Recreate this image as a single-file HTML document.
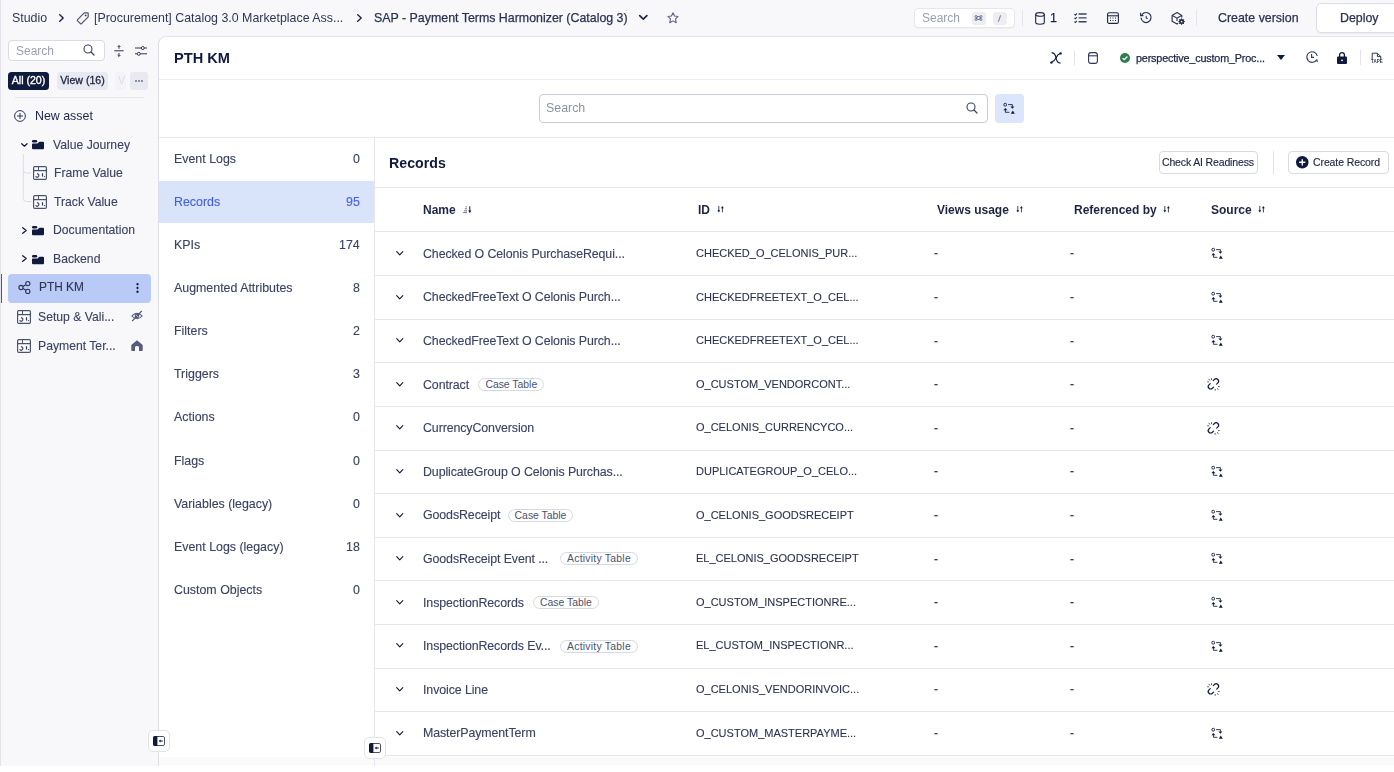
<!DOCTYPE html>
<html><head><meta charset="utf-8">
<style>
*{box-sizing:border-box;margin:0;padding:0}
html,body{width:1394px;height:772px;overflow:hidden;background:#fff}
body{font-family:"Liberation Sans",sans-serif;color:#1c2340;position:relative}
.a{position:absolute;white-space:nowrap;line-height:1;will-change:transform}
svg{position:absolute;overflow:visible}
#app{position:absolute;left:0;top:0;width:1394px;height:766px;background:#f8f8fb;overflow:hidden}
#lb{position:absolute;left:0;top:0;width:1px;height:766px;background:#e4e4ea}
#panel{position:absolute;left:158px;top:35.5px;width:1250px;height:740px;background:#fff;border-left:1px solid #dedee6;border-top:1px solid #e4e4ea;border-top-left-radius:8px}
.tb{font-size:12.4px;color:#2f3654}
.hl{position:absolute;height:1px;background:#e6e6ec}
.vl{position:absolute;width:1px;background:#e4e4ea}
.cat{font-size:12.4px;color:#3a4262;-webkit-text-stroke:0.12px currentColor}
.rt{font-size:12.4px;color:#3a4262;letter-spacing:-0.1px;-webkit-text-stroke:0.12px currentColor}
.id{font-size:11px;color:#2c3350;-webkit-text-stroke:0.1px currentColor}
.th{font-size:12px;font-weight:700;color:#1e2544}
.badge{position:absolute;height:13px;border:1px solid #d6d8e2;border-radius:7px;font-size:10.4px;color:#4a5270;line-height:11px;padding:0 6px;white-space:nowrap}
.med{-webkit-text-stroke:0.25px currentColor}
.btn{position:absolute;border:1px solid #d9dbe3;border-radius:4px;background:#fff}
</style></head><body>
<div id="app">
<div id="lb"></div>

<div class="a tb" style="left:11.5px;top:11.5px">Studio</div>
<svg style="left:58.5px;top:13.5px" width="5" height="8" viewBox="0 0 5 8"><path d="M0.7 0.7 L4.2 4.0 L0.7 7.3" fill="none" stroke="#1e2544" stroke-width="1.4" stroke-linecap="round" stroke-linejoin="round"/></svg>
<svg style="left:77px;top:11.5px" width="12" height="13" viewBox="0 0 12 13"><path d="M7.2 0.8 H10.6 Q11.2 0.8 11.2 1.4 V4.8 L4.6 11.6 Q4 12.2 3.4 11.6 L0.6 8.8 Q0 8.2 0.6 7.6Z" fill="none" stroke="#4a5270" stroke-width="1.2" stroke-linejoin="round"/><circle cx="8.6" cy="3.4" r="0.9" fill="#2f3654"/></svg>
<div class="a tb" style="left:94px;top:11.5px">[Procurement] Catalog 3.0 Marketplace Ass...</div>
<svg style="left:356.5px;top:13.5px" width="5" height="8" viewBox="0 0 5 8"><path d="M0.7 0.7 L4.2 4.0 L0.7 7.3" fill="none" stroke="#1e2544" stroke-width="1.4" stroke-linecap="round" stroke-linejoin="round"/></svg>
<div class="a tb med" style="left:374px;top:11.5px;color:#2a3252">SAP - Payment Terms Harmonizer (Catalog 3)</div>
<svg style="left:639.2px;top:15px" width="8.6" height="5" viewBox="0 0 8.6 5"><path d="M0.7 0.7 L4.3 4.2 L7.8999999999999995 0.7" fill="none" stroke="#1e2544" stroke-width="1.7" stroke-linecap="round" stroke-linejoin="round"/></svg>
<svg style="left:666.5px;top:12.3px" width="12" height="12" viewBox="0 0 13 13"><path d="M6.5 0.8 L8.2 4.4 L12 4.8 L9.2 7.5 L10 11.6 L6.5 9.6 L3 11.6 L3.8 7.5 L1 4.8 L4.8 4.4Z" fill="none" stroke="#5f6685" stroke-width="1.2" stroke-linejoin="round"/></svg>
<div class="btn" style="left:914px;top:8px;width:100.5px;height:19.5px;border-color:#e6e6ec;box-shadow:0 1px 1px rgba(0,0,0,0.03)"></div>
<div class="a" style="left:922px;top:12px;font-size:12px;color:#9a9fb0">Search</div>
<div class="a" style="left:971.5px;top:11.5px;width:14px;height:13px;background:#ededf2;border-radius:3px"></div>
<svg style="left:975px;top:15px" width="7" height="6" viewBox="0 0 7 6"><path d="M2 1.5 H5 V4.5 H2Z M2 1.5 A1 1 0 1 0 1 2.5 H2 M5 1.5 A1 1 0 1 1 6 2.5 H5 M2 4.5 A1 1 0 1 1 1 3.5 H2 M5 4.5 A1 1 0 1 0 6 3.5 H5" fill="none" stroke="#6a7090" stroke-width="0.9"/></svg>
<div class="a" style="left:992.5px;top:11.5px;width:13.5px;height:13px;background:#ededf2;border-radius:3px"></div>
<svg style="left:997px;top:14.5px" width="5" height="7" viewBox="0 0 5 7"><path d="M3.6 0.4 L1.4 6.6" stroke="#7a80a0" stroke-width="1.1"/></svg>
<div class="vl" style="left:1022px;top:10px;height:16px"></div>
<svg style="left:1035px;top:11.6px" width="10" height="13" viewBox="0 0 10 13"><ellipse cx="5" cy="2.4" rx="4.3" ry="1.8" fill="none" stroke="#1e2544" stroke-width="1.1"/><path d="M0.7 2.4 V10.6 Q0.7 12.3 5 12.3 Q9.3 12.3 9.3 10.6 V2.4" fill="none" stroke="#1e2544" stroke-width="1.1"/></svg>
<div class="a med" style="left:1050px;top:11.5px;font-size:12.4px;color:#1e2544">1</div>
<svg style="left:1074.4px;top:13.3px" width="13" height="10" viewBox="0 0 13 10"><path d="M0.4 1.2 L1.4 2.1 L2.9 0.4 M0.4 4.9 L1.4 5.8 L2.9 4.1 M0.4 8.6 L1.4 9.5 L2.9 7.8" fill="none" stroke="#2a3252" stroke-width="1.1"/><path d="M4.6 1 H12.6 M4.6 4.9 H12.6 M4.6 8.8 H12.6" stroke="#3a4262" stroke-width="1.4"/></svg>
<svg style="left:1107px;top:11.5px" width="12" height="12" viewBox="0 0 12 12"><rect x="0.6" y="0.8" width="10.8" height="10.6" rx="1.5" fill="none" stroke="#1e2544" stroke-width="1.1"/><path d="M0.6 3.8 H11.4" stroke="#1e2544" stroke-width="1.1"/><path d="M3 6 h1 M5.5 6 h1 M8 6 h1 M3 8.5 h1 M5.5 8.5 h1 M8 8.5 h1" stroke="#1e2544" stroke-width="1"/></svg>
<svg style="left:1139.5px;top:12.2px" width="12" height="11.5" viewBox="0 0 12 11.5"><path d="M2 2.6 A5 5 0 1 1 1.1 6" fill="none" stroke="#2a3252" stroke-width="1.2" stroke-linecap="round"/><path d="M0.6 0.8 V3.6 H3.4" fill="none" stroke="#2a3252" stroke-width="1.1"/><path d="M6.2 3.8 V6.4 H7.8" fill="none" stroke="#2a3252" stroke-width="1"/></svg>
<svg style="left:1171.3px;top:11.7px" width="14" height="13" viewBox="0 0 14 13"><path d="M10.8 5.6 V3.4 L6 0.6 L1.1 3.4 V9.2 L6 12 L7.2 11.3" fill="none" stroke="#2a3252" stroke-width="1.2" stroke-linejoin="round"/><path d="M1.4 3.6 L6 6.2 L10.6 3.6 M6 6.2 V9" fill="none" stroke="#2a3252" stroke-width="1.1"/><circle cx="10.6" cy="9.6" r="2.5" fill="#1e2544"/><path d="M10.6 6.4 V12.8 M7.4 9.6 H13.8 M8.3 7.3 L12.9 11.9 M12.9 7.3 L8.3 11.9" stroke="#1e2544" stroke-width="1"/><circle cx="10.6" cy="9.6" r="0.9" fill="#f8f8fb"/></svg>
<div class="vl" style="left:1196px;top:10px;height:16px"></div>
<div class="a tb med" style="left:1218px;top:11.5px;color:#2a3252">Create version</div>
<div class="btn" style="left:1316px;top:3px;width:90px;height:29.5px;border-radius:5px;border-color:#dcdde5;box-shadow:0 1px 1px rgba(0,0,0,0.04)"></div>
<div class="a tb med" style="left:1340px;top:11.5px;color:#2a3252">Deploy</div>
<div class="btn" style="left:8px;top:40px;width:97px;height:21px;border-color:#dadbe3;border-radius:4px"></div>
<div class="a" style="left:16px;top:44.5px;font-size:12px;color:#9da1b0">Search</div>
<svg style="left:83px;top:44px" width="12" height="12" viewBox="0 0 12 12"><circle cx="5" cy="5" r="4" fill="none" stroke="#3a4262" stroke-width="1.1"/><path d="M8 8 L11 11" stroke="#3a4262" stroke-width="1.2" stroke-linecap="round"/></svg>
<svg style="left:114px;top:44.5px" width="10" height="12" viewBox="0 0 10 12"><path d="M0.3 5.8 H9.7" stroke="#2f3654" stroke-width="1"/><path d="M5 0.6 V3.8 M3.6 2 L5 0.6 L6.4 2" fill="none" stroke="#2f3654" stroke-width="1"/><path d="M5 11.4 V8 M3.6 10 L5 11.4 L6.4 10" fill="none" stroke="#2f3654" stroke-width="1"/></svg>
<svg style="left:135px;top:44.5px" width="12" height="11" viewBox="0 0 12 11"><path d="M0 3 H6.2 M9.4 3 H12 M0 8.8 H2.2 M5.4 8.8 H12" stroke="#2f3654" stroke-width="1"/><circle cx="7.8" cy="3" r="1.5" fill="none" stroke="#2f3654" stroke-width="1"/><circle cx="3.8" cy="8.8" r="1.5" fill="none" stroke="#2f3654" stroke-width="1"/></svg>
<div class="a med" style="left:8px;top:71.8px;width:41px;height:18px;background:#0f1a3c;border-radius:3.5px;color:#fff;font-size:10.6px;text-align:center;line-height:17.6px;-webkit-text-stroke:0.35px #fff">All (20)</div>
<div class="a med" style="left:56.5px;top:71.8px;width:51px;height:18px;background:#e9e9f1;border-radius:3.5px;color:#1e2544;font-size:10.6px;text-align:center;line-height:17.6px;-webkit-text-stroke:0.3px #1e2544">View (16)</div>
<div class="a" style="left:115px;top:71.8px;width:11px;height:18px;background:#f4f4f8;border-radius:3px;color:#dcdde5;font-size:10.6px;padding-left:3px;line-height:17.5px;overflow:hidden">V</div>
<div class="a" style="left:130px;top:71.8px;width:17.6px;height:18px;background:#e9e9f1;border-radius:3px"></div>
<svg style="left:135.3px;top:80px" width="8" height="2" viewBox="0 0 8 2"><circle cx="1" cy="1" r="0.8" fill="#0f1a3c"/><circle cx="4" cy="1" r="0.8" fill="#0f1a3c"/><circle cx="7" cy="1" r="0.8" fill="#0f1a3c"/></svg>
<div class="hl" style="left:15px;top:97px;width:129px;background:#e6e6ec"></div>
<svg style="left:14px;top:110px" width="12" height="12" viewBox="0 0 12 12"><circle cx="6" cy="6" r="5.4" fill="none" stroke="#2f3654" stroke-width="1"/><path d="M6 3 V9 M3 6 H9" stroke="#2f3654" stroke-width="1"/></svg>
<div class="a" style="left:35px;top:110px;font-size:12.4px;color:#1e2544">New asset</div>
<svg style="left:20.8px;top:142.6px" width="6.8" height="4" viewBox="0 0 6.8 4"><path d="M0.7 0.7 L3.4 3.2 L6.1 0.7" fill="none" stroke="#0f1a3c" stroke-width="1.2" stroke-linecap="round" stroke-linejoin="round"/></svg>
<svg style="left:32px;top:140px" width="12" height="10" viewBox="0 0 12 10">
<rect x="0" y="0" width="5.2" height="2.4" rx="1.2" fill="#0f1a3c"/>
<path d="M0 4.4 Q0 3.6 0.8 3.6 H5 Q5.6 3.6 6 3.1 L6.8 2.2 Q7.2 1.7 7.8 1.7 H11 Q12 1.7 12 2.7 V8.3 Q12 9.3 11 9.3 H1 Q0 9.3 0 8.3Z" fill="#0f1a3c"/>
</svg>
<div class="a cat" style="left:53px;top:139px;font-size:12.2px">Value Journey</div>
<svg style="left:22px;top:154px" width="12" height="50" viewBox="0 0 12 50"><path d="M1.3 0 V16 Q1.3 19 4.3 19 H9.5 M1.3 16 V44.5 Q1.3 47.5 4.3 47.5 H9.5" fill="none" stroke="#dcdde5" stroke-width="1"/></svg>
<svg style="left:32.7px;top:166px" width="14" height="14" viewBox="0 0 14 14">
<rect x="0.6" y="0.6" width="12.8" height="12.8" rx="1.2" fill="#fff" stroke="#4a5270" stroke-width="1.2"/>
<path d="M0.6 4.6 H13.4" stroke="#4a5270" stroke-width="1.3"/><path d="M5.5 0.6 V4.6" stroke="#4a5270" stroke-width="1"/>
<path d="M2.6 10.2 Q3.4 11.6 4.8 11.2 Q6.3 10.4 5.8 8.8 Q5.3 7.6 3.9 7.6" fill="none" stroke="#3d4568" stroke-width="1.2"/>
<path d="M9.5 7.2 V10.6" stroke="#2a3360" stroke-width="1.2"/><circle cx="11.5" cy="10.6" r="0.7" fill="#3d4568"/>
</svg>
<div class="a cat" style="left:54px;top:167px;font-size:12.2px">Frame Value</div>
<svg style="left:32.7px;top:195px" width="14" height="14" viewBox="0 0 14 14">
<rect x="0.6" y="0.6" width="12.8" height="12.8" rx="1.2" fill="#fff" stroke="#4a5270" stroke-width="1.2"/>
<path d="M0.6 4.6 H13.4" stroke="#4a5270" stroke-width="1.3"/><path d="M5.5 0.6 V4.6" stroke="#4a5270" stroke-width="1"/>
<path d="M2.6 10.2 Q3.4 11.6 4.8 11.2 Q6.3 10.4 5.8 8.8 Q5.3 7.6 3.9 7.6" fill="none" stroke="#3d4568" stroke-width="1.2"/>
<path d="M9.5 7.2 V10.6" stroke="#2a3360" stroke-width="1.2"/><circle cx="11.5" cy="10.6" r="0.7" fill="#3d4568"/>
</svg>
<div class="a cat" style="left:54px;top:196px;font-size:12.2px">Track Value</div>
<svg style="left:21.5px;top:226.5px" width="5" height="7" viewBox="0 0 5 7"><path d="M0.7 0.7 L4.2 3.5 L0.7 6.3" fill="none" stroke="#0f1a3c" stroke-width="1.3" stroke-linecap="round" stroke-linejoin="round"/></svg>
<svg style="left:32px;top:226px" width="12" height="10" viewBox="0 0 12 10">
<rect x="0" y="0" width="5.2" height="2.4" rx="1.2" fill="#0f1a3c"/>
<path d="M0 4.4 Q0 3.6 0.8 3.6 H5 Q5.6 3.6 6 3.1 L6.8 2.2 Q7.2 1.7 7.8 1.7 H11 Q12 1.7 12 2.7 V8.3 Q12 9.3 11 9.3 H1 Q0 9.3 0 8.3Z" fill="#0f1a3c"/>
</svg>
<div class="a cat" style="left:53px;top:224px;font-size:12.2px">Documentation</div>
<svg style="left:21.5px;top:255px" width="5" height="7" viewBox="0 0 5 7"><path d="M0.7 0.7 L4.2 3.5 L0.7 6.3" fill="none" stroke="#0f1a3c" stroke-width="1.3" stroke-linecap="round" stroke-linejoin="round"/></svg>
<svg style="left:32px;top:254.8px" width="12" height="10" viewBox="0 0 12 10">
<rect x="0" y="0" width="5.2" height="2.4" rx="1.2" fill="#0f1a3c"/>
<path d="M0 4.4 Q0 3.6 0.8 3.6 H5 Q5.6 3.6 6 3.1 L6.8 2.2 Q7.2 1.7 7.8 1.7 H11 Q12 1.7 12 2.7 V8.3 Q12 9.3 11 9.3 H1 Q0 9.3 0 8.3Z" fill="#0f1a3c"/>
</svg>
<div class="a cat" style="left:53px;top:253px;font-size:12.2px">Backend</div>
<div class="a" style="left:8px;top:274px;width:143px;height:28.5px;background:#b9caf6;border-radius:4px"></div>
<div class="a" style="left:1px;top:274px;width:1.3px;height:28.5px;background:#3f4de6"></div>
<svg style="left:17.5px;top:281px" width="13" height="13" viewBox="0 0 13 13"><circle cx="3" cy="6.5" r="2.1" fill="none" stroke="#2f3654" stroke-width="1.1"/><circle cx="9.8" cy="2.6" r="2.1" fill="none" stroke="#2f3654" stroke-width="1.1"/><circle cx="9.8" cy="10.4" r="2.1" fill="none" stroke="#2f3654" stroke-width="1.1"/><path d="M4.9 5.5 L7.9 3.7 M4.9 7.5 L7.9 9.3" stroke="#2f3654" stroke-width="1.1"/></svg>
<div class="a cat" style="left:38.5px;top:282.3px;font-size:11.9px;color:#2f3654">PTH KM</div>
<svg style="left:135.6px;top:283px" width="3" height="10" viewBox="0 0 3 10"><rect x="0.4" y="0" width="2.2" height="2.4" rx="1.1" fill="#0f1a3c"/><rect x="0.4" y="3.8" width="2.2" height="2.4" rx="1.1" fill="#0f1a3c"/><rect x="0.4" y="7.6" width="2.2" height="2.4" rx="1.1" fill="#0f1a3c"/></svg>
<svg style="left:17px;top:309.5px" width="14" height="14" viewBox="0 0 14 14">
<rect x="0.6" y="0.6" width="12.8" height="12.8" rx="1.2" fill="#fff" stroke="#4a5270" stroke-width="1.2"/>
<path d="M0.6 4.6 H13.4" stroke="#4a5270" stroke-width="1.3"/><path d="M5.5 0.6 V4.6" stroke="#4a5270" stroke-width="1"/>
<path d="M2.6 10.2 Q3.4 11.6 4.8 11.2 Q6.3 10.4 5.8 8.8 Q5.3 7.6 3.9 7.6" fill="none" stroke="#3d4568" stroke-width="1.2"/>
<path d="M9.5 7.2 V10.6" stroke="#2a3360" stroke-width="1.2"/><circle cx="11.5" cy="10.6" r="0.7" fill="#3d4568"/>
</svg>
<div class="a cat" style="left:38px;top:311px;font-size:12.2px">Setup &amp; Vali...</div>
<svg style="left:131px;top:310px" width="12" height="12" viewBox="0 0 12 12"><path d="M0.8 6 Q6 0.4 11.2 6 Q6 11.6 0.8 6Z" fill="none" stroke="#4a5270" stroke-width="1.1"/><circle cx="6" cy="6" r="1.8" fill="none" stroke="#4a5270" stroke-width="1.1"/><path d="M1.2 11.2 L10.8 0.8" stroke="#4a5270" stroke-width="1.2"/></svg>
<svg style="left:17px;top:338.5px" width="14" height="14" viewBox="0 0 14 14">
<rect x="0.6" y="0.6" width="12.8" height="12.8" rx="1.2" fill="#fff" stroke="#4a5270" stroke-width="1.2"/>
<path d="M0.6 4.6 H13.4" stroke="#4a5270" stroke-width="1.3"/><path d="M5.5 0.6 V4.6" stroke="#4a5270" stroke-width="1"/>
<path d="M2.6 10.2 Q3.4 11.6 4.8 11.2 Q6.3 10.4 5.8 8.8 Q5.3 7.6 3.9 7.6" fill="none" stroke="#3d4568" stroke-width="1.2"/>
<path d="M9.5 7.2 V10.6" stroke="#2a3360" stroke-width="1.2"/><circle cx="11.5" cy="10.6" r="0.7" fill="#3d4568"/>
</svg>
<div class="a cat" style="left:38px;top:340px;font-size:12.2px">Payment Ter...</div>
<svg style="left:131px;top:339.5px" width="12" height="11" viewBox="0 0 12 11"><path d="M6 0.3 L11.7 5 V10.3 Q11.7 11 11 11 H8 V7.2 Q8 6 6 6 Q4 6 4 7.2 V11 H1 Q0.3 11 0.3 10.3 V5Z" fill="#555c7d"/></svg>
</div>
<div id="panel"></div>
<div class="a" style="left:159px;top:757px;width:1235px;height:8px;background:#fafafb"></div>
<div class="a" style="left:174px;top:50.5px;font-size:14.6px;font-weight:700;color:#0f1a3c">PTH KM</div>
<div class="hl" style="left:159px;top:79px;width:1235px;background:#ebebf0"></div>
<svg style="left:1050px;top:51.5px" width="12" height="12" viewBox="0 0 12 12"><path d="M1.2 10.6 C4 9.5 5.5 7 6 6 C6.8 4 8 2 10.8 1.2" fill="none" stroke="#0f1a3c" stroke-width="1.1"/><path d="M1.6 0.6 C4.4 0.8 5.6 3.4 6 5.8 C6.4 8.4 8 11 10.6 11.2" fill="none" stroke="#0f1a3c" stroke-width="1.1"/><circle cx="1.4" cy="10.6" r="1.2" fill="#0f1a3c"/><circle cx="10.6" cy="1.4" r="1.2" fill="#0f1a3c"/></svg>
<div class="vl" style="left:1074px;top:50.5px;height:14px"></div>
<svg style="left:1088px;top:51.5px" width="10" height="12" viewBox="0 0 10 12"><rect x="0.6" y="0.6" width="8.8" height="10.8" rx="2.4" fill="none" stroke="#2f3654" stroke-width="1.1"/><path d="M0.6 3.8 H9.4" stroke="#2f3654" stroke-width="1.1"/></svg>
<svg style="left:1119.5px;top:52.5px" width="10" height="10" viewBox="0 0 10 10"><circle cx="5" cy="5" r="5" fill="#2e7d4f"/><path d="M2.6 5.1 L4.3 6.7 L7.4 3.5" fill="none" stroke="#fff" stroke-width="1.3"/></svg>
<div class="a med" style="left:1135.5px;top:52.6px;font-size:10.8px;color:#1e2544;letter-spacing:-0.17px">perspective_custom_Proc...</div>
<svg style="left:1276.5px;top:55px" width="8" height="5" viewBox="0 0 8 5"><path d="M0 0 H8 L4 5Z" fill="#0f1a3c"/></svg>
<svg style="left:1306px;top:51px" width="13" height="12" viewBox="0 0 13 12"><path d="M10.8 8.5 A5.3 5.3 0 1 1 11.3 5" fill="none" stroke="#2f3654" stroke-width="1.1"/><path d="M5.6 3 V6.4 H8" fill="none" stroke="#2f3654" stroke-width="1.1"/><path d="M9.5 10 L12 11 L11.4 8.6Z" fill="#2f3654"/></svg>
<svg style="left:1336.5px;top:51.5px" width="10" height="12" viewBox="0 0 10 12"><path d="M2.6 5 V3 A2.4 2.4 0 0 1 7.4 3 V5" fill="none" stroke="#0f1a3c" stroke-width="1.3"/><rect x="0" y="4.6" width="10" height="7.4" rx="1" fill="#0f1a3c"/><circle cx="5" cy="8.3" r="0.9" fill="#fff"/></svg>
<div class="vl" style="left:1359.5px;top:50px;height:14.5px"></div>
<svg style="left:1371px;top:51.5px" width="11" height="13" viewBox="0 0 11 13"><path d="M1.2 8 V1.2 H6.4 L9.8 4.6 V8" fill="none" stroke="#2f3654" stroke-width="1"/><path d="M6.4 1.2 V4.6 H9.8" fill="none" stroke="#2f3654" stroke-width="1"/></svg>
<div class="a" style="left:1371px;top:59.5px;font-size:4.5px;font-weight:700;color:#2f3654">TAPE</div>
<div class="btn" style="left:539px;top:94px;width:449px;height:28.5px;border-color:#c9ccd8;border-radius:4px"></div>
<div class="a" style="left:546px;top:102px;font-size:12.4px;color:#8d92a5">Search</div>
<svg style="left:966px;top:102px" width="12" height="12" viewBox="0 0 12 12"><circle cx="5" cy="5" r="4" fill="none" stroke="#3a4262" stroke-width="1.1"/><path d="M8 8 L11 11" stroke="#3a4262" stroke-width="1.2" stroke-linecap="round"/></svg>
<div class="a" style="left:995px;top:94px;width:28.5px;height:28.5px;background:#dbe5fb;border-radius:4px"></div>
<svg style="left:1003px;top:103px" width="12" height="11" viewBox="0 0 12 11">
<rect x="0.9" y="0.3" width="2.6" height="2.8" rx="1.1" fill="none" stroke="#0f1a3c" stroke-width="0.9"/>
<path d="M5.1 1.6 H9.4 V3.6" fill="none" stroke="#0f1a3c" stroke-width="1" opacity="0.85"/>
<path d="M7.4 3.5 H11.4 L9.4 5.7Z" fill="#0f1a3c"/>
<path d="M2.4 6.6 V9.3 H6.4" fill="none" stroke="#0f1a3c" stroke-width="1" opacity="0.85"/>
<path d="M0.4 7.2 L2.4 4.9 L4.4 7.2Z" fill="#0f1a3c"/>
<path d="M7.8 10.7 L9.8 7.6 L11.8 10.7Z" fill="#0f1a3c"/>
</svg>
<div class="hl" style="left:159px;top:137px;width:1235px;background:#e6e6ec"></div>
<div class="vl" style="left:374px;top:137px;height:629px;background:#e6e6ec"></div>
<div class="a cat" style="left:174px;top:152.7px;color:#3a4262">Event Logs</div>
<div class="a cat" style="right:1034px;top:152.7px;color:#3a4262">0</div>
<div class="a" style="left:159px;top:181px;width:215px;height:42px;background:#d9e4fb"></div>
<div class="a cat" style="left:174px;top:195.8px;color:#4361e0">Records</div>
<div class="a cat" style="right:1034px;top:195.8px;color:#4361e0">95</div>
<div class="a cat" style="left:174px;top:238.9px;color:#3a4262">KPIs</div>
<div class="a cat" style="right:1034px;top:238.9px;color:#3a4262">174</div>
<div class="a cat" style="left:174px;top:282.1px;color:#3a4262">Augmented Attributes</div>
<div class="a cat" style="right:1034px;top:282.1px;color:#3a4262">8</div>
<div class="a cat" style="left:174px;top:325.2px;color:#3a4262">Filters</div>
<div class="a cat" style="right:1034px;top:325.2px;color:#3a4262">2</div>
<div class="a cat" style="left:174px;top:368.3px;color:#3a4262">Triggers</div>
<div class="a cat" style="right:1034px;top:368.3px;color:#3a4262">3</div>
<div class="a cat" style="left:174px;top:411.4px;color:#3a4262">Actions</div>
<div class="a cat" style="right:1034px;top:411.4px;color:#3a4262">0</div>
<div class="a cat" style="left:174px;top:454.5px;color:#3a4262">Flags</div>
<div class="a cat" style="right:1034px;top:454.5px;color:#3a4262">0</div>
<div class="a cat" style="left:174px;top:497.7px;color:#3a4262">Variables (legacy)</div>
<div class="a cat" style="right:1034px;top:497.7px;color:#3a4262">0</div>
<div class="a cat" style="left:174px;top:540.8px;color:#3a4262">Event Logs (legacy)</div>
<div class="a cat" style="right:1034px;top:540.8px;color:#3a4262">18</div>
<div class="a cat" style="left:174px;top:583.9px;color:#3a4262">Custom Objects</div>
<div class="a cat" style="right:1034px;top:583.9px;color:#3a4262">0</div>
<div class="a" style="left:389px;top:155.5px;font-size:14.2px;font-weight:700;color:#0f1a3c">Records</div>
<div class="btn" style="left:1158.5px;top:151px;width:99.5px;height:23px;border-radius:4px"></div>
<div class="a" style="-webkit-text-stroke:0.15px #1e2544;left:1162px;top:157px;font-size:10.5px;color:#1e2544;letter-spacing:-0.15px">Check AI Readiness</div>
<div class="vl" style="left:1272.5px;top:151px;height:23px"></div>
<div class="btn" style="left:1287.5px;top:151px;width:101.5px;height:23px;border-radius:4px"></div>
<svg style="left:1296px;top:156px" width="12.5" height="12.5" viewBox="0 0 12 12"><circle cx="6" cy="6" r="6" fill="#0f1a3c"/><path d="M6 3 V9 M3 6 H9" stroke="#fff" stroke-width="1.3"/></svg>
<div class="a" style="-webkit-text-stroke:0.15px #1e2544;left:1313px;top:157px;font-size:10.5px;color:#1e2544;letter-spacing:-0.1px">Create Record</div>
<div class="hl" style="left:375px;top:187px;width:1019px;background:#e6e6ec"></div>
<div class="a th" style="left:423px;top:204px">Name</div>
<svg style="left:463px;top:206px" width="9" height="7" viewBox="0 0 9 7">
<path d="M2.6 0.8 H4 M1.8 2.8 H4 M1 4.8 H4 M0.2 6.6 H4" stroke="#0f1a3c" stroke-width="0.8" opacity="0.75"/>
<path d="M6.8 0.3 V6" stroke="#0f1a3c" stroke-width="1"/><path d="M5.2 4.6 L6.8 6.9 L8.4 4.6Z" fill="#0f1a3c"/>
</svg>
<div class="a th" style="left:697.5px;top:204px">ID</div>
<svg style="left:716.5px;top:206.3px" width="7" height="7" viewBox="0 0 7 7">
<path d="M1.8 0 V5" stroke="#0f1a3c" stroke-width="1" opacity="0.8"/><path d="M0.4 4.2 L1.8 6.4 L3.2 4.2Z" fill="#0f1a3c"/>
<path d="M5.4 6.4 V1.6" stroke="#0f1a3c" stroke-width="1" opacity="0.8"/><path d="M4 2.2 L5.4 0 L6.8 2.2Z" fill="#0f1a3c"/>
</svg>
<div class="a th" style="left:937px;top:204px">Views usage</div>
<svg style="left:1016.3px;top:206.3px" width="7" height="7" viewBox="0 0 7 7">
<path d="M1.8 0 V5" stroke="#0f1a3c" stroke-width="1" opacity="0.8"/><path d="M0.4 4.2 L1.8 6.4 L3.2 4.2Z" fill="#0f1a3c"/>
<path d="M5.4 6.4 V1.6" stroke="#0f1a3c" stroke-width="1" opacity="0.8"/><path d="M4 2.2 L5.4 0 L6.8 2.2Z" fill="#0f1a3c"/>
</svg>
<div class="a th" style="left:1074px;top:204px">Referenced by</div>
<svg style="left:1163.2px;top:206.3px" width="7" height="7" viewBox="0 0 7 7">
<path d="M1.8 0 V5" stroke="#0f1a3c" stroke-width="1" opacity="0.8"/><path d="M0.4 4.2 L1.8 6.4 L3.2 4.2Z" fill="#0f1a3c"/>
<path d="M5.4 6.4 V1.6" stroke="#0f1a3c" stroke-width="1" opacity="0.8"/><path d="M4 2.2 L5.4 0 L6.8 2.2Z" fill="#0f1a3c"/>
</svg>
<div class="a th" style="left:1211px;top:204px">Source</div>
<svg style="left:1258.2px;top:206.3px" width="7" height="7" viewBox="0 0 7 7">
<path d="M1.8 0 V5" stroke="#0f1a3c" stroke-width="1" opacity="0.8"/><path d="M0.4 4.2 L1.8 6.4 L3.2 4.2Z" fill="#0f1a3c"/>
<path d="M5.4 6.4 V1.6" stroke="#0f1a3c" stroke-width="1" opacity="0.8"/><path d="M4 2.2 L5.4 0 L6.8 2.2Z" fill="#0f1a3c"/>
</svg>
<div class="hl" style="left:375px;top:231px;width:1019px;background:#e6e6ec"></div>
<svg style="left:396px;top:251.0px" width="7.5" height="4.6" viewBox="0 0 7.5 4.6"><path d="M0.7 0.7 L3.75 3.8 L6.8 0.7" fill="none" stroke="#0f1a3c" stroke-width="1.15" stroke-linecap="round" stroke-linejoin="round"/></svg>
<div class="a rt" style="left:423px;top:247.8px">Checked O Celonis PurchaseRequi...</div>
<div class="a id" style="left:695.5px;top:247.9px">CHECKED_O_CELONIS_PUR...</div>
<div class="a" style="left:933.6px;top:247.4px;font-size:12px;color:#2f3654;-webkit-text-stroke:0.2px #2f3654">-</div>
<div class="a" style="left:1070.2px;top:247.4px;font-size:12px;color:#2f3654;-webkit-text-stroke:0.2px #2f3654">-</div>
<svg style="left:1211px;top:248.1px" width="12" height="11" viewBox="0 0 12 11">
<rect x="0.9" y="0.3" width="2.6" height="2.8" rx="1.1" fill="none" stroke="#0f1a3c" stroke-width="0.9"/>
<path d="M5.1 1.6 H9.4 V3.6" fill="none" stroke="#0f1a3c" stroke-width="1" opacity="0.85"/>
<path d="M7.4 3.5 H11.4 L9.4 5.7Z" fill="#0f1a3c"/>
<path d="M2.4 6.6 V9.3 H6.4" fill="none" stroke="#0f1a3c" stroke-width="1" opacity="0.85"/>
<path d="M0.4 7.2 L2.4 4.9 L4.4 7.2Z" fill="#0f1a3c"/>
<path d="M7.8 10.7 L9.8 7.6 L11.8 10.7Z" fill="#0f1a3c"/>
</svg>
<div class="hl" style="left:375px;top:275.2px;width:1019px;background:#e6e6ec"></div>
<svg style="left:396px;top:294.6px" width="7.5" height="4.6" viewBox="0 0 7.5 4.6"><path d="M0.7 0.7 L3.75 3.8 L6.8 0.7" fill="none" stroke="#0f1a3c" stroke-width="1.15" stroke-linecap="round" stroke-linejoin="round"/></svg>
<div class="a rt" style="left:423px;top:291.4px">CheckedFreeText O Celonis Purch...</div>
<div class="a id" style="left:695.5px;top:291.5px">CHECKEDFREETEXT_O_CEL...</div>
<div class="a" style="left:933.6px;top:291.0px;font-size:12px;color:#2f3654;-webkit-text-stroke:0.2px #2f3654">-</div>
<div class="a" style="left:1070.2px;top:291.0px;font-size:12px;color:#2f3654;-webkit-text-stroke:0.2px #2f3654">-</div>
<svg style="left:1211px;top:291.7px" width="12" height="11" viewBox="0 0 12 11">
<rect x="0.9" y="0.3" width="2.6" height="2.8" rx="1.1" fill="none" stroke="#0f1a3c" stroke-width="0.9"/>
<path d="M5.1 1.6 H9.4 V3.6" fill="none" stroke="#0f1a3c" stroke-width="1" opacity="0.85"/>
<path d="M7.4 3.5 H11.4 L9.4 5.7Z" fill="#0f1a3c"/>
<path d="M2.4 6.6 V9.3 H6.4" fill="none" stroke="#0f1a3c" stroke-width="1" opacity="0.85"/>
<path d="M0.4 7.2 L2.4 4.9 L4.4 7.2Z" fill="#0f1a3c"/>
<path d="M7.8 10.7 L9.8 7.6 L11.8 10.7Z" fill="#0f1a3c"/>
</svg>
<div class="hl" style="left:375px;top:318.8px;width:1019px;background:#e6e6ec"></div>
<svg style="left:396px;top:338.20000000000005px" width="7.5" height="4.6" viewBox="0 0 7.5 4.6"><path d="M0.7 0.7 L3.75 3.8 L6.8 0.7" fill="none" stroke="#0f1a3c" stroke-width="1.15" stroke-linecap="round" stroke-linejoin="round"/></svg>
<div class="a rt" style="left:423px;top:335.0px">CheckedFreeText O Celonis Purch...</div>
<div class="a id" style="left:695.5px;top:335.1px">CHECKEDFREETEXT_O_CEL...</div>
<div class="a" style="left:933.6px;top:334.6px;font-size:12px;color:#2f3654;-webkit-text-stroke:0.2px #2f3654">-</div>
<div class="a" style="left:1070.2px;top:334.6px;font-size:12px;color:#2f3654;-webkit-text-stroke:0.2px #2f3654">-</div>
<svg style="left:1211px;top:335.3px" width="12" height="11" viewBox="0 0 12 11">
<rect x="0.9" y="0.3" width="2.6" height="2.8" rx="1.1" fill="none" stroke="#0f1a3c" stroke-width="0.9"/>
<path d="M5.1 1.6 H9.4 V3.6" fill="none" stroke="#0f1a3c" stroke-width="1" opacity="0.85"/>
<path d="M7.4 3.5 H11.4 L9.4 5.7Z" fill="#0f1a3c"/>
<path d="M2.4 6.6 V9.3 H6.4" fill="none" stroke="#0f1a3c" stroke-width="1" opacity="0.85"/>
<path d="M0.4 7.2 L2.4 4.9 L4.4 7.2Z" fill="#0f1a3c"/>
<path d="M7.8 10.7 L9.8 7.6 L11.8 10.7Z" fill="#0f1a3c"/>
</svg>
<div class="hl" style="left:375px;top:362.4px;width:1019px;background:#e6e6ec"></div>
<svg style="left:396px;top:381.8px" width="7.5" height="4.6" viewBox="0 0 7.5 4.6"><path d="M0.7 0.7 L3.75 3.8 L6.8 0.7" fill="none" stroke="#0f1a3c" stroke-width="1.15" stroke-linecap="round" stroke-linejoin="round"/></svg>
<div class="a rt" style="left:423px;top:378.6px">Contract</div>
<div class="badge" style="left:478.4px;top:377.9px;letter-spacing:0">Case Table</div>
<div class="a id" style="left:695.5px;top:378.7px">O_CUSTOM_VENDORCONT...</div>
<div class="a" style="left:933.6px;top:378.2px;font-size:12px;color:#2f3654;-webkit-text-stroke:0.2px #2f3654">-</div>
<div class="a" style="left:1070.2px;top:378.2px;font-size:12px;color:#2f3654;-webkit-text-stroke:0.2px #2f3654">-</div>
<svg style="left:1206.7px;top:377.9px" width="13" height="13" viewBox="0 0 13 13">
<path d="M6.2 2.6 L7.4 1.5 A2.4 2.4 0 0 1 10.9 4.9 L9.7 6.1" fill="none" stroke="#0f1a3c" stroke-width="1.2" stroke-linecap="round"/>
<path d="M3.2 5.6 L2.0 6.8 A2.4 2.4 0 0 0 5.4 10.3 L6.6 9.1" fill="none" stroke="#0f1a3c" stroke-width="1.2" stroke-linecap="round"/>
<path d="M2.0 1.2 L2.6 2.2 M4.5 0.6 L4.5 1.6 M0.6 3.8 L1.6 3.8 M11.3 8.6 L12.3 8.6 M10.5 10.6 L11.1 11.5 M8.2 11.3 L8.2 12.3" stroke="#0f1a3c" stroke-width="0.9" stroke-linecap="round" opacity="0.8"/>
</svg>
<div class="hl" style="left:375px;top:406.0px;width:1019px;background:#e6e6ec"></div>
<svg style="left:396px;top:425.40000000000003px" width="7.5" height="4.6" viewBox="0 0 7.5 4.6"><path d="M0.7 0.7 L3.75 3.8 L6.8 0.7" fill="none" stroke="#0f1a3c" stroke-width="1.15" stroke-linecap="round" stroke-linejoin="round"/></svg>
<div class="a rt" style="left:423px;top:422.2px">CurrencyConversion</div>
<div class="a id" style="left:695.5px;top:422.3px">O_CELONIS_CURRENCYCO...</div>
<div class="a" style="left:933.6px;top:421.8px;font-size:12px;color:#2f3654;-webkit-text-stroke:0.2px #2f3654">-</div>
<div class="a" style="left:1070.2px;top:421.8px;font-size:12px;color:#2f3654;-webkit-text-stroke:0.2px #2f3654">-</div>
<svg style="left:1206.7px;top:421.5px" width="13" height="13" viewBox="0 0 13 13">
<path d="M6.2 2.6 L7.4 1.5 A2.4 2.4 0 0 1 10.9 4.9 L9.7 6.1" fill="none" stroke="#0f1a3c" stroke-width="1.2" stroke-linecap="round"/>
<path d="M3.2 5.6 L2.0 6.8 A2.4 2.4 0 0 0 5.4 10.3 L6.6 9.1" fill="none" stroke="#0f1a3c" stroke-width="1.2" stroke-linecap="round"/>
<path d="M2.0 1.2 L2.6 2.2 M4.5 0.6 L4.5 1.6 M0.6 3.8 L1.6 3.8 M11.3 8.6 L12.3 8.6 M10.5 10.6 L11.1 11.5 M8.2 11.3 L8.2 12.3" stroke="#0f1a3c" stroke-width="0.9" stroke-linecap="round" opacity="0.8"/>
</svg>
<div class="hl" style="left:375px;top:449.6px;width:1019px;background:#e6e6ec"></div>
<svg style="left:396px;top:469.00000000000006px" width="7.5" height="4.6" viewBox="0 0 7.5 4.6"><path d="M0.7 0.7 L3.75 3.8 L6.8 0.7" fill="none" stroke="#0f1a3c" stroke-width="1.15" stroke-linecap="round" stroke-linejoin="round"/></svg>
<div class="a rt" style="left:423px;top:465.8px">DuplicateGroup O Celonis Purchas...</div>
<div class="a id" style="left:695.5px;top:465.9px">DUPLICATEGROUP_O_CELO...</div>
<div class="a" style="left:933.6px;top:465.4px;font-size:12px;color:#2f3654;-webkit-text-stroke:0.2px #2f3654">-</div>
<div class="a" style="left:1070.2px;top:465.4px;font-size:12px;color:#2f3654;-webkit-text-stroke:0.2px #2f3654">-</div>
<svg style="left:1211px;top:466.1px" width="12" height="11" viewBox="0 0 12 11">
<rect x="0.9" y="0.3" width="2.6" height="2.8" rx="1.1" fill="none" stroke="#0f1a3c" stroke-width="0.9"/>
<path d="M5.1 1.6 H9.4 V3.6" fill="none" stroke="#0f1a3c" stroke-width="1" opacity="0.85"/>
<path d="M7.4 3.5 H11.4 L9.4 5.7Z" fill="#0f1a3c"/>
<path d="M2.4 6.6 V9.3 H6.4" fill="none" stroke="#0f1a3c" stroke-width="1" opacity="0.85"/>
<path d="M0.4 7.2 L2.4 4.9 L4.4 7.2Z" fill="#0f1a3c"/>
<path d="M7.8 10.7 L9.8 7.6 L11.8 10.7Z" fill="#0f1a3c"/>
</svg>
<div class="hl" style="left:375px;top:493.2px;width:1019px;background:#e6e6ec"></div>
<svg style="left:396px;top:512.6px" width="7.5" height="4.6" viewBox="0 0 7.5 4.6"><path d="M0.7 0.7 L3.75 3.8 L6.8 0.7" fill="none" stroke="#0f1a3c" stroke-width="1.15" stroke-linecap="round" stroke-linejoin="round"/></svg>
<div class="a rt" style="left:423px;top:509.4px">GoodsReceipt</div>
<div class="badge" style="left:507.6px;top:508.7px;letter-spacing:0">Case Table</div>
<div class="a id" style="left:695.5px;top:509.5px">O_CELONIS_GOODSRECEIPT</div>
<div class="a" style="left:933.6px;top:509.0px;font-size:12px;color:#2f3654;-webkit-text-stroke:0.2px #2f3654">-</div>
<div class="a" style="left:1070.2px;top:509.0px;font-size:12px;color:#2f3654;-webkit-text-stroke:0.2px #2f3654">-</div>
<svg style="left:1211px;top:509.7px" width="12" height="11" viewBox="0 0 12 11">
<rect x="0.9" y="0.3" width="2.6" height="2.8" rx="1.1" fill="none" stroke="#0f1a3c" stroke-width="0.9"/>
<path d="M5.1 1.6 H9.4 V3.6" fill="none" stroke="#0f1a3c" stroke-width="1" opacity="0.85"/>
<path d="M7.4 3.5 H11.4 L9.4 5.7Z" fill="#0f1a3c"/>
<path d="M2.4 6.6 V9.3 H6.4" fill="none" stroke="#0f1a3c" stroke-width="1" opacity="0.85"/>
<path d="M0.4 7.2 L2.4 4.9 L4.4 7.2Z" fill="#0f1a3c"/>
<path d="M7.8 10.7 L9.8 7.6 L11.8 10.7Z" fill="#0f1a3c"/>
</svg>
<div class="hl" style="left:375px;top:536.8px;width:1019px;background:#e6e6ec"></div>
<svg style="left:396px;top:556.1999999999999px" width="7.5" height="4.6" viewBox="0 0 7.5 4.6"><path d="M0.7 0.7 L3.75 3.8 L6.8 0.7" fill="none" stroke="#0f1a3c" stroke-width="1.15" stroke-linecap="round" stroke-linejoin="round"/></svg>
<div class="a rt" style="left:423px;top:553.0px">GoodsReceipt Event ...</div>
<div class="badge" style="left:560px;top:552.3px;letter-spacing:0.25px">Activity Table</div>
<div class="a id" style="left:695.5px;top:553.1px">EL_CELONIS_GOODSRECEIPT</div>
<div class="a" style="left:933.6px;top:552.6px;font-size:12px;color:#2f3654;-webkit-text-stroke:0.2px #2f3654">-</div>
<div class="a" style="left:1070.2px;top:552.6px;font-size:12px;color:#2f3654;-webkit-text-stroke:0.2px #2f3654">-</div>
<svg style="left:1211px;top:553.3px" width="12" height="11" viewBox="0 0 12 11">
<rect x="0.9" y="0.3" width="2.6" height="2.8" rx="1.1" fill="none" stroke="#0f1a3c" stroke-width="0.9"/>
<path d="M5.1 1.6 H9.4 V3.6" fill="none" stroke="#0f1a3c" stroke-width="1" opacity="0.85"/>
<path d="M7.4 3.5 H11.4 L9.4 5.7Z" fill="#0f1a3c"/>
<path d="M2.4 6.6 V9.3 H6.4" fill="none" stroke="#0f1a3c" stroke-width="1" opacity="0.85"/>
<path d="M0.4 7.2 L2.4 4.9 L4.4 7.2Z" fill="#0f1a3c"/>
<path d="M7.8 10.7 L9.8 7.6 L11.8 10.7Z" fill="#0f1a3c"/>
</svg>
<div class="hl" style="left:375px;top:580.4px;width:1019px;background:#e6e6ec"></div>
<svg style="left:396px;top:599.8px" width="7.5" height="4.6" viewBox="0 0 7.5 4.6"><path d="M0.7 0.7 L3.75 3.8 L6.8 0.7" fill="none" stroke="#0f1a3c" stroke-width="1.15" stroke-linecap="round" stroke-linejoin="round"/></svg>
<div class="a rt" style="left:423px;top:596.6px">InspectionRecords</div>
<div class="badge" style="left:533px;top:595.9px;letter-spacing:0">Case Table</div>
<div class="a id" style="left:695.5px;top:596.7px">O_CUSTOM_INSPECTIONRE...</div>
<div class="a" style="left:933.6px;top:596.2px;font-size:12px;color:#2f3654;-webkit-text-stroke:0.2px #2f3654">-</div>
<div class="a" style="left:1070.2px;top:596.2px;font-size:12px;color:#2f3654;-webkit-text-stroke:0.2px #2f3654">-</div>
<svg style="left:1211px;top:596.9px" width="12" height="11" viewBox="0 0 12 11">
<rect x="0.9" y="0.3" width="2.6" height="2.8" rx="1.1" fill="none" stroke="#0f1a3c" stroke-width="0.9"/>
<path d="M5.1 1.6 H9.4 V3.6" fill="none" stroke="#0f1a3c" stroke-width="1" opacity="0.85"/>
<path d="M7.4 3.5 H11.4 L9.4 5.7Z" fill="#0f1a3c"/>
<path d="M2.4 6.6 V9.3 H6.4" fill="none" stroke="#0f1a3c" stroke-width="1" opacity="0.85"/>
<path d="M0.4 7.2 L2.4 4.9 L4.4 7.2Z" fill="#0f1a3c"/>
<path d="M7.8 10.7 L9.8 7.6 L11.8 10.7Z" fill="#0f1a3c"/>
</svg>
<div class="hl" style="left:375px;top:624.0px;width:1019px;background:#e6e6ec"></div>
<svg style="left:396px;top:643.4px" width="7.5" height="4.6" viewBox="0 0 7.5 4.6"><path d="M0.7 0.7 L3.75 3.8 L6.8 0.7" fill="none" stroke="#0f1a3c" stroke-width="1.15" stroke-linecap="round" stroke-linejoin="round"/></svg>
<div class="a rt" style="left:423px;top:640.2px">InspectionRecords Ev...</div>
<div class="badge" style="left:560px;top:639.5px;letter-spacing:0.25px">Activity Table</div>
<div class="a id" style="left:695.5px;top:640.3px">EL_CUSTOM_INSPECTIONR...</div>
<div class="a" style="left:933.6px;top:639.8px;font-size:12px;color:#2f3654;-webkit-text-stroke:0.2px #2f3654">-</div>
<div class="a" style="left:1070.2px;top:639.8px;font-size:12px;color:#2f3654;-webkit-text-stroke:0.2px #2f3654">-</div>
<svg style="left:1211px;top:640.5px" width="12" height="11" viewBox="0 0 12 11">
<rect x="0.9" y="0.3" width="2.6" height="2.8" rx="1.1" fill="none" stroke="#0f1a3c" stroke-width="0.9"/>
<path d="M5.1 1.6 H9.4 V3.6" fill="none" stroke="#0f1a3c" stroke-width="1" opacity="0.85"/>
<path d="M7.4 3.5 H11.4 L9.4 5.7Z" fill="#0f1a3c"/>
<path d="M2.4 6.6 V9.3 H6.4" fill="none" stroke="#0f1a3c" stroke-width="1" opacity="0.85"/>
<path d="M0.4 7.2 L2.4 4.9 L4.4 7.2Z" fill="#0f1a3c"/>
<path d="M7.8 10.7 L9.8 7.6 L11.8 10.7Z" fill="#0f1a3c"/>
</svg>
<div class="hl" style="left:375px;top:667.6px;width:1019px;background:#e6e6ec"></div>
<svg style="left:396px;top:687.0px" width="7.5" height="4.6" viewBox="0 0 7.5 4.6"><path d="M0.7 0.7 L3.75 3.8 L6.8 0.7" fill="none" stroke="#0f1a3c" stroke-width="1.15" stroke-linecap="round" stroke-linejoin="round"/></svg>
<div class="a rt" style="left:423px;top:683.8px">Invoice Line</div>
<div class="a id" style="left:695.5px;top:683.9px">O_CELONIS_VENDORINVOIC...</div>
<div class="a" style="left:933.6px;top:683.4px;font-size:12px;color:#2f3654;-webkit-text-stroke:0.2px #2f3654">-</div>
<div class="a" style="left:1070.2px;top:683.4px;font-size:12px;color:#2f3654;-webkit-text-stroke:0.2px #2f3654">-</div>
<svg style="left:1206.7px;top:683.1px" width="13" height="13" viewBox="0 0 13 13">
<path d="M6.2 2.6 L7.4 1.5 A2.4 2.4 0 0 1 10.9 4.9 L9.7 6.1" fill="none" stroke="#0f1a3c" stroke-width="1.2" stroke-linecap="round"/>
<path d="M3.2 5.6 L2.0 6.8 A2.4 2.4 0 0 0 5.4 10.3 L6.6 9.1" fill="none" stroke="#0f1a3c" stroke-width="1.2" stroke-linecap="round"/>
<path d="M2.0 1.2 L2.6 2.2 M4.5 0.6 L4.5 1.6 M0.6 3.8 L1.6 3.8 M11.3 8.6 L12.3 8.6 M10.5 10.6 L11.1 11.5 M8.2 11.3 L8.2 12.3" stroke="#0f1a3c" stroke-width="0.9" stroke-linecap="round" opacity="0.8"/>
</svg>
<div class="hl" style="left:375px;top:711.2px;width:1019px;background:#e6e6ec"></div>
<svg style="left:396px;top:730.6px" width="7.5" height="4.6" viewBox="0 0 7.5 4.6"><path d="M0.7 0.7 L3.75 3.8 L6.8 0.7" fill="none" stroke="#0f1a3c" stroke-width="1.15" stroke-linecap="round" stroke-linejoin="round"/></svg>
<div class="a rt" style="left:423px;top:727.4px">MasterPaymentTerm</div>
<div class="a id" style="left:695.5px;top:727.5px">O_CUSTOM_MASTERPAYME...</div>
<div class="a" style="left:933.6px;top:727.0px;font-size:12px;color:#2f3654;-webkit-text-stroke:0.2px #2f3654">-</div>
<div class="a" style="left:1070.2px;top:727.0px;font-size:12px;color:#2f3654;-webkit-text-stroke:0.2px #2f3654">-</div>
<svg style="left:1211px;top:727.7px" width="12" height="11" viewBox="0 0 12 11">
<rect x="0.9" y="0.3" width="2.6" height="2.8" rx="1.1" fill="none" stroke="#0f1a3c" stroke-width="0.9"/>
<path d="M5.1 1.6 H9.4 V3.6" fill="none" stroke="#0f1a3c" stroke-width="1" opacity="0.85"/>
<path d="M7.4 3.5 H11.4 L9.4 5.7Z" fill="#0f1a3c"/>
<path d="M2.4 6.6 V9.3 H6.4" fill="none" stroke="#0f1a3c" stroke-width="1" opacity="0.85"/>
<path d="M0.4 7.2 L2.4 4.9 L4.4 7.2Z" fill="#0f1a3c"/>
<path d="M7.8 10.7 L9.8 7.6 L11.8 10.7Z" fill="#0f1a3c"/>
</svg>
<div class="hl" style="left:375px;top:754.8px;width:1019px;background:#e6e6ec"></div>
<div class="btn" style="left:147.5px;top:729.5px;width:22.5px;height:22.5px;border-radius:5px;border-color:#e2e3ea"></div>
<svg style="left:153.0px;top:736.0px" width="12" height="10" viewBox="0 0 12 10"><rect x="0.5" y="0.5" width="11" height="9" rx="1.4" fill="#fff" stroke="#4a5270" stroke-width="1"/><path d="M1.9 0 H4.4 V10 H1.9 Q0 10 0 8.1 V1.9 Q0 0 1.9 0Z" fill="#0f1a3c"/><path d="M9.8 5 H7" stroke="#0f1a3c" stroke-width="1"/><path d="M5.6 5 L7.6 3.4 V6.6Z" fill="#0f1a3c"/></svg>
<div class="btn" style="left:363.5px;top:736.5px;width:22.5px;height:22.5px;border-radius:5px;border-color:#e2e3ea"></div>
<svg style="left:369.0px;top:743.0px" width="12" height="10" viewBox="0 0 12 10"><rect x="0.5" y="0.5" width="11" height="9" rx="1.4" fill="#fff" stroke="#4a5270" stroke-width="1"/><path d="M1.9 0 H4.4 V10 H1.9 Q0 10 0 8.1 V1.9 Q0 0 1.9 0Z" fill="#0f1a3c"/><path d="M9.8 5 H7" stroke="#0f1a3c" stroke-width="1"/><path d="M5.6 5 L7.6 3.4 V6.6Z" fill="#0f1a3c"/></svg>
<div class="a" style="left:0;top:766px;width:1394px;height:6px;background:#fff"></div>
</body></html>
